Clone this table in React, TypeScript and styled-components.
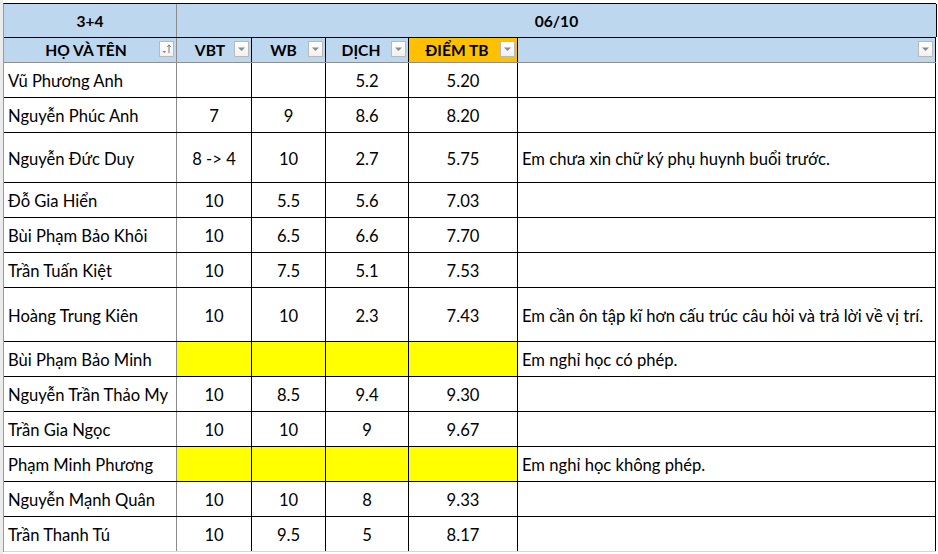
import React from "react";
import styled, { createGlobalStyle } from "styled-components";

const Global = createGlobalStyle`
  html, body { margin: 0; padding: 0; background: #ffffff; }
  body { font-family: Lato, "Noto Sans", sans-serif; color: #000; }
`;

const COLS = "173px 75px 74px 83px 109px 418px";

const Page = styled.div`
  width: 938px;
  height: 554px;
  overflow: hidden;
  display: flex;
  background: #fff;
`;

const Gutter = styled.div`
  width: 3px;
  background: #ececec;
  flex: none;
`;

const Sheet = styled.div`
  padding-top: 3px;
  display: flex;
  flex-direction: column;
`;

const Table = styled.div`
  border-top: 1px solid #000;
  border-left: 1px solid #9a9a9a;
  display: flex;
  flex-direction: column;
  width: 933px;
  box-sizing: border-box;
`;

const Row = styled.div<{ $h: number; $cols?: string; $line?: string }>`
  display: grid;
  grid-template-columns: ${(p) => p.$cols ?? COLS};
  height: ${(p) => p.$h}px;
  border-bottom: 1px solid ${(p) => p.$line ?? "#000"};
  box-sizing: border-box;
`;

const Cell = styled.div<{ $bg?: string; $align?: "left" | "center"; $edge?: string }>`
  box-sizing: border-box;
  border-right: 1px solid ${(p) => p.$edge ?? "#000"};
  background: ${(p) => p.$bg ?? "#fff"};
  display: flex;
  align-items: center;
  justify-content: ${(p) => (p.$align === "left" ? "flex-start" : "center")};
  padding: 2px ${(p) => (p.$align === "left" ? "4px" : "0")} 0;
  font-size: 16.6px;
  font-weight: 400;
  white-space: nowrap;
  position: relative;
  overflow: hidden;
`;

const HeadCell = styled(Cell)`
  font-weight: 700;
  font-size: 15.6px;
  padding-top: 0;
`;

const HeadLabel = styled.span<{ $shift?: number }>`
  transform: translateX(${(p) => p.$shift ?? 0}px);
`;

const FilterBtn = styled.span`
  position: absolute;
  right: 2px;
  top: 3px;
  width: 15px;
  height: 16px;
  box-sizing: border-box;
  background: linear-gradient(#ffffff, #f1f1f1);
  border: 1px solid #b9b9b9;
  display: flex;
  align-items: center;
  justify-content: center;
`;

const BLUE = "#BDD7EE";
const ORANGE = "#FFC000";
const YELLOW = "#FFFF00";

function Filter({ sorted }: { sorted?: boolean }) {
  return (
    <FilterBtn>
      {sorted ? (
        <svg width="11" height="12" viewBox="0 0 11 12">
          <path d="M1.5 8 L5 8 L3.25 10 Z" fill="#7a7a7a" />
          <path d="M8 2 L8 10" stroke="#7a7a7a" strokeWidth="1" />
          <path d="M6.3 4 L8 1.8 L9.7 4" stroke="#7a7a7a" strokeWidth="1" fill="none" />
        </svg>
      ) : (
        <svg width="9" height="6" viewBox="0 0 9 6">
          <path d="M1 1.5 L8 1.5 L4.5 5 Z" fill="#8a8a8a" />
        </svg>
      )}
    </FilterBtn>
  );
}

type Student = {
  name: string;
  vbt?: string;
  wb?: string;
  dich?: string;
  tb?: string;
  note?: string;
  h: number;
  absent?: boolean;
};

const students: Student[] = [
  { name: "Vũ Phương Anh", dich: "5.2", tb: "5.20", h: 35 },
  { name: "Nguyễn Phúc Anh", vbt: "7", wb: "9", dich: "8.6", tb: "8.20", h: 35 },
  { name: "Nguyễn Đức Duy", vbt: "8 -> 4", wb: "10", dich: "2.7", tb: "5.75", note: "Em chưa xin chữ ký phụ huynh buổi trước.", h: 50 },
  { name: "Đỗ Gia Hiển", vbt: "10", wb: "5.5", dich: "5.6", tb: "7.03", h: 35 },
  { name: "Bùi Phạm Bảo Khôi", vbt: "10", wb: "6.5", dich: "6.6", tb: "7.70", h: 35 },
  { name: "Trần Tuấn Kiệt", vbt: "10", wb: "7.5", dich: "5.1", tb: "7.53", h: 35 },
  { name: "Hoàng Trung Kiên", vbt: "10", wb: "10", dich: "2.3", tb: "7.43", note: "Em cần ôn tập kĩ hơn cấu trúc câu hỏi và trả lời về vị trí.", h: 54 },
  { name: "Bùi Phạm Bảo Minh", note: "Em nghỉ học có phép.", h: 35, absent: true },
  { name: "Nguyễn Trần Thảo My", vbt: "10", wb: "8.5", dich: "9.4", tb: "9.30", h: 35 },
  { name: "Trần Gia Ngọc", vbt: "10", wb: "10", dich: "9", tb: "9.67", h: 35 },
  { name: "Phạm Minh Phương", note: "Em nghỉ học không phép.", h: 35, absent: true },
  { name: "Nguyễn Mạnh Quân", vbt: "10", wb: "10", dich: "8", tb: "9.33", h: 35 },
  { name: "Trần Thanh Tú", vbt: "10", wb: "9.5", dich: "5", tb: "8.17", h: 35 },
];

export default function App() {
  return (
    <Page>
      <Global />
      <Gutter />
      <Sheet>
        <Table>
          <Row $h={34} $cols="173px 760px">
            <HeadCell $bg={BLUE} $edge="#8a8a8a">3+4</HeadCell>
            <HeadCell $bg={BLUE}>06/10</HeadCell>
          </Row>
          <Row $h={25} $line="#8f8f8f">
            <HeadCell $bg={BLUE} $edge="#8a8a8a">
              <HeadLabel $shift={-4}>HỌ VÀ TÊN</HeadLabel>
              <Filter sorted />
            </HeadCell>
            <HeadCell $bg={BLUE}>
              <HeadLabel $shift={-4}>VBT</HeadLabel>
              <Filter />
            </HeadCell>
            <HeadCell $bg={BLUE}>
              <HeadLabel $shift={-5}>WB</HeadLabel>
              <Filter />
            </HeadCell>
            <HeadCell $bg={BLUE}>
              <HeadLabel $shift={-6}>DỊCH</HeadLabel>
              <Filter />
            </HeadCell>
            <HeadCell $bg={ORANGE}>
              <HeadLabel $shift={-6}>ĐIỂM TB</HeadLabel>
              <Filter />
            </HeadCell>
            <HeadCell $bg={BLUE}>
              <Filter />
            </HeadCell>
          </Row>
          {students.map((s, i) => {
            const fill = s.absent ? YELLOW : undefined;
            return (
              <Row key={s.name} $h={s.h} $line={i === students.length - 1 ? "#d6d6d6" : "#000"}>
                <Cell $align="left" $edge="#8a8a8a">{s.name}</Cell>
                <Cell $bg={fill}>{s.vbt ?? ""}</Cell>
                <Cell $bg={fill}>{s.wb ?? ""}</Cell>
                <Cell $bg={fill}>{s.dich ?? ""}</Cell>
                <Cell $bg={fill}>{s.tb ?? ""}</Cell>
                <Cell $align="left">{s.note ?? ""}</Cell>
              </Row>
            );
          })}
        </Table>
      </Sheet>
    </Page>
  );
}
